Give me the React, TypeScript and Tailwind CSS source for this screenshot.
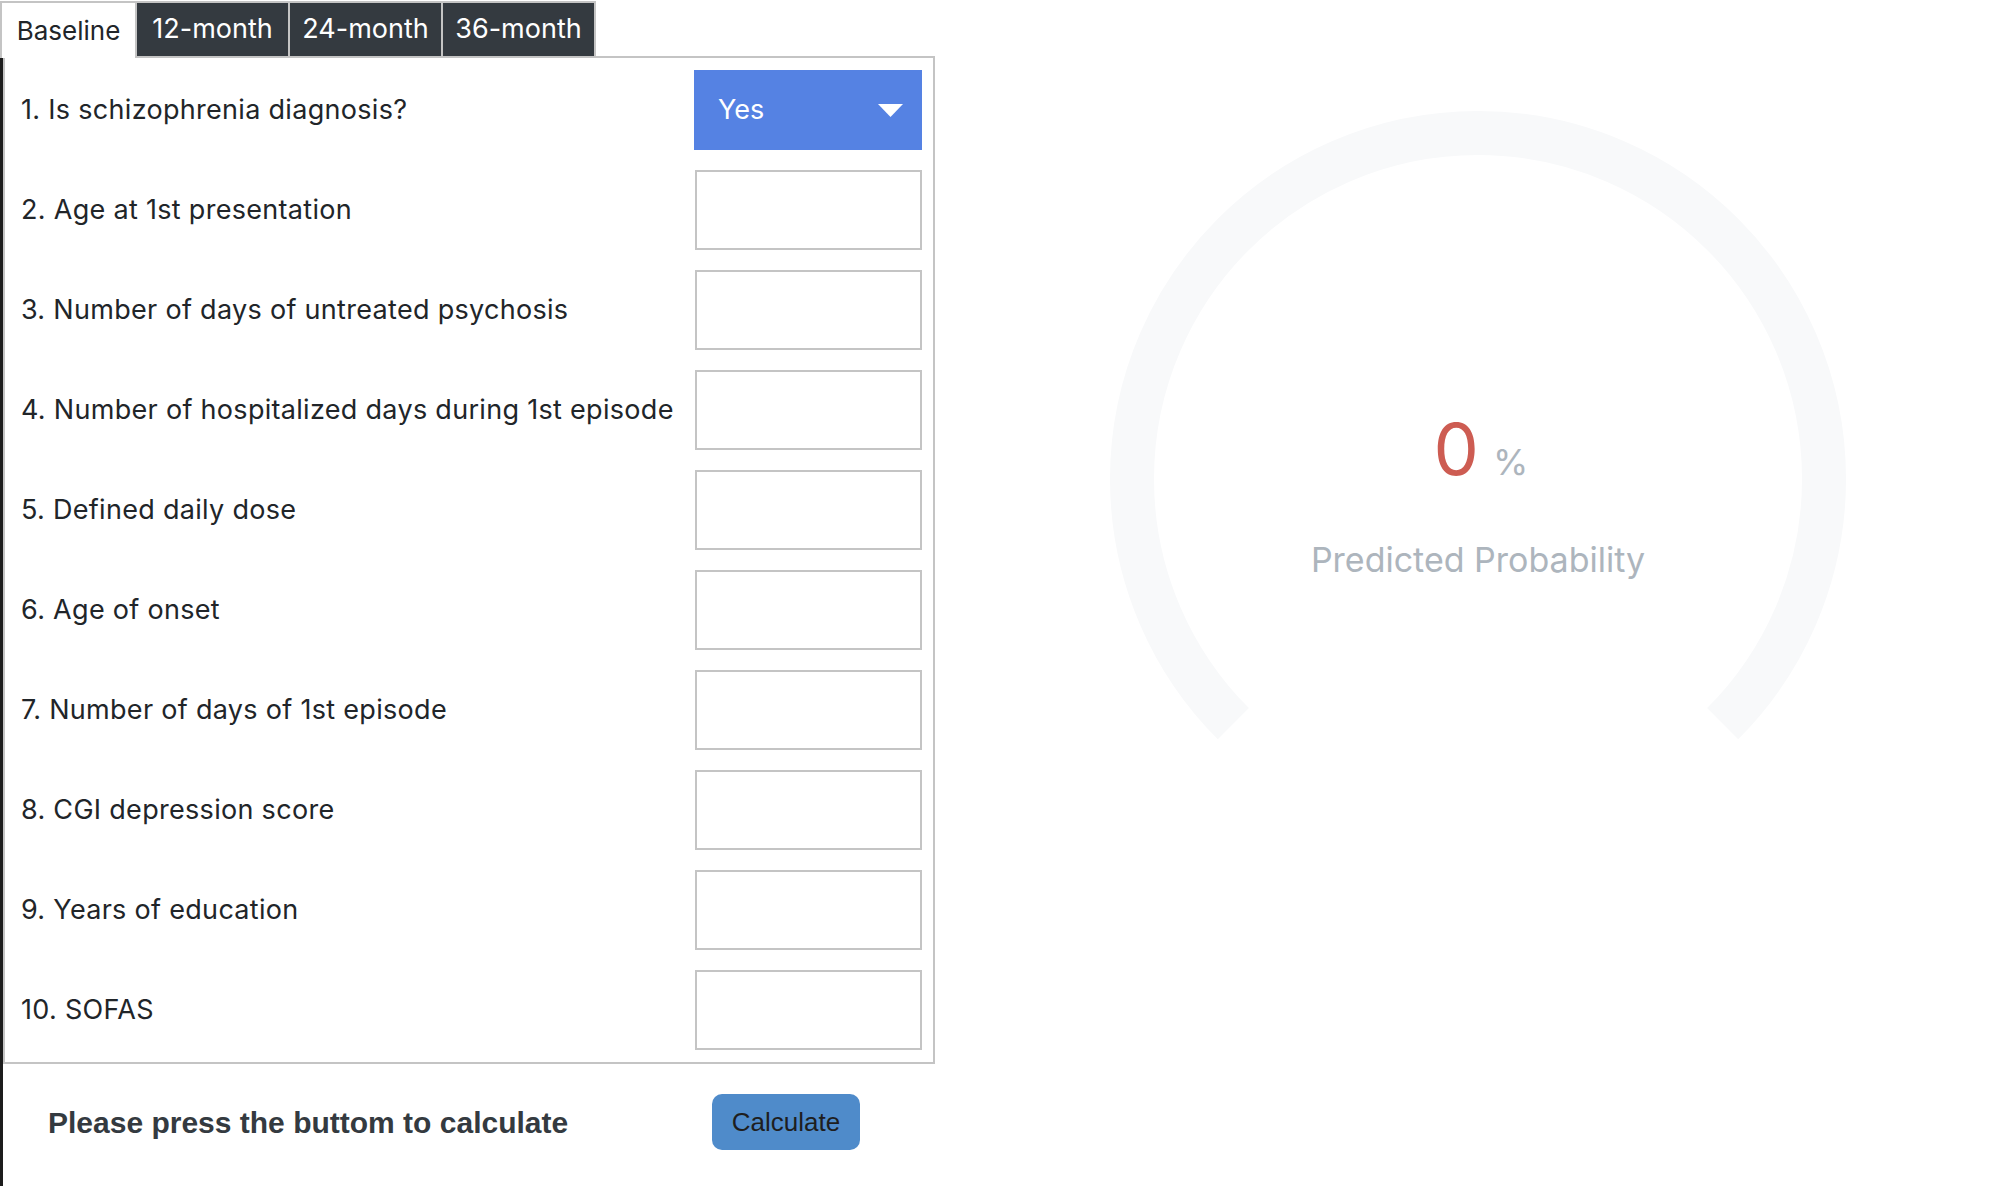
import React from "react";

const labels = [
  "1. Is schizophrenia diagnosis?",
  "2. Age at 1st presentation",
  "3. Number of days of untreated psychosis",
  "4. Number of hospitalized days during 1st episode",
  "5. Defined daily dose",
  "6. Age of onset",
  "7. Number of days of 1st episode",
  "8. CGI depression score",
  "9. Years of education",
  "10. SOFAS",
];

function Gauge() {
  const r = 346;
  const c = 368;
  const d = r * Math.SQRT1_2;
  const sx = c - d;
  const sy = c + d;
  const ex = c + d;
  return (
    <div className="relative w-[736px] h-[736px]">
      <svg width="736" height="736" viewBox="0 0 736 736">
        <path
          d={`M ${sx} ${sy} A ${r} ${r} 0 1 1 ${ex} ${sy}`}
          fill="none"
          stroke="#f8f9fa"
          strokeWidth="44"
        />
      </svg>
      <div className="absolute inset-0 flex flex-col items-center pt-[302px]">
        <div className="flex items-baseline pl-[6px]">
          <span className="text-[72px] leading-none text-[#cd5c52]">0</span>
          <span className="ml-[14px] text-[36px] leading-none text-[#adb5bd]">%</span>
        </div>
        <div className="mt-[58px] text-[34px] leading-none text-[#adb5bd]">Predicted Probability</div>
      </div>
    </div>
  );
}

export default function App() {
  return (
    <div className="w-[2002px] h-[1186px] bg-white overflow-hidden flex flex-col font-['Inter',sans-serif] text-[#212529]">
      {/* Tabs */}
      <div className="flex h-[58px] pt-[1px] w-[935px]">
        <div className="h-full w-[137px] flex items-center justify-center border-l-2 border-t-2 border-r-2 border-[#c4c4c4] bg-white text-[26px] text-[#212529]">
          Baseline
        </div>
        {["12-month", "24-month", "36-month"].map((t) => (
          <div
            key={t}
            className="h-full w-[153px] flex items-center justify-center bg-[#343a40] text-white text-[27px] border-t-2 border-r-2 border-b-2 border-[#c4c4c4]"
          >
            {t}
          </div>
        ))}
        <div className="flex-1 border-b-2 border-[#c4c4c4]" />
      </div>

      {/* Body */}
      <div className="flex-1 flex border-l-[3px] border-[#1c1c1c]">
        <div className="w-[932px] flex flex-col">
          <div className="border-l-2 border-r-2 border-b-2 border-[#c4c4c4] pt-[12px] pb-[12px] pl-[16px] pr-[11px] flex flex-col gap-[20px]">
            {labels.map((l, i) => (
              <div key={l} className="h-[80px] flex items-center justify-between">
                <span className="text-[27px] tracking-[0.3px] text-[#212529]">{l}</span>
                {i === 0 ? (
                  <div className="w-[228px] h-[80px] bg-[#5582e3] flex items-center justify-between pl-[24px] pr-[19px]">
                    <span className="text-[27px] text-white">Yes</span>
                    <svg width="25" height="13" viewBox="0 0 25 13">
                      <polygon points="0,0 25,0 12.5,13" fill="#ffffff" />
                    </svg>
                  </div>
                ) : (
                  <div className="w-[227px] h-[80px] border-2 border-[#c4c4c4] bg-white" />
                )}
              </div>
            ))}
          </div>
          <div className="flex items-start pt-[30px] pl-[45px]">
            <div className="w-[664px] h-[56px] flex items-center font-['Liberation_Sans',Arial,sans-serif] font-bold text-[30px] text-[#343a40]">
              Please press the buttom to calculate
            </div>
            <button className="w-[148px] h-[56px] rounded-[10px] bg-[#4f8bca] font-['Liberation_Sans',Arial,sans-serif] text-[26px] text-[#1e1e1e]">
              Calculate
            </button>
          </div>
        </div>
        <div className="flex-1 pl-[175px] pt-[53px]">
          <Gauge />
        </div>
      </div>
    </div>
  );
}
